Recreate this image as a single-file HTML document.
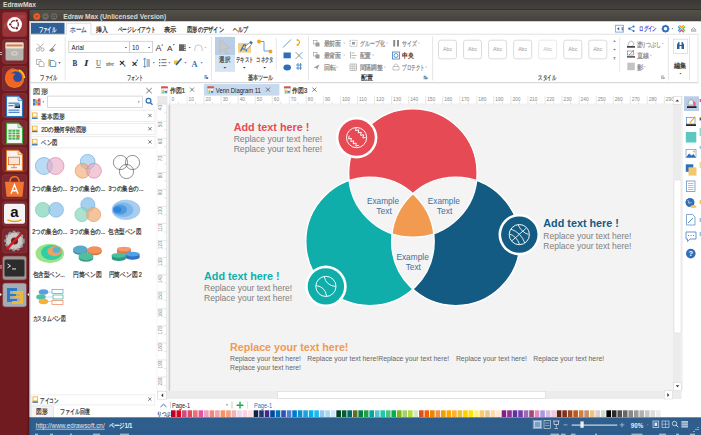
<!DOCTYPE html>
<html><head><meta charset="utf-8"><style>
html,body{margin:0;padding:0;width:701px;height:435px;overflow:hidden;background:#fff}
svg{display:block}
text{font-family:"Liberation Sans",sans-serif}
</style></head><body>
<svg width="701" height="435" viewBox="0 0 701 435">
<defs><linearGradient id="tb" x1="0" y1="0" x2="0" y2="1"><stop offset="0" stop-color="#3a3935"/><stop offset="1" stop-color="#45433e"/></linearGradient><linearGradient id="wt" x1="0" y1="0" x2="0" y2="1"><stop offset="0" stop-color="#54514b"/><stop offset="1" stop-color="#45423d"/></linearGradient></defs>
<rect x="0" y="0" width="701" height="10" fill="url(#tb)"/>
<rect x="0" y="9.3" width="701" height="0.8" fill="#2b2a27"/>
<text x="3" y="7" font-size="6.7" fill="#dcd8cf" font-weight="bold" textLength="33" lengthAdjust="spacingAndGlyphs">EdrawMax</text>
<defs><linearGradient id="lg" x1="0" x2="1"><stop offset="0" stop-color="#5a1418"/><stop offset="1" stop-color="#6e1e20"/></linearGradient></defs>
<rect x="0" y="10" width="29" height="425" fill="#701b1f"/>
<rect x="27.8" y="10" width="1.2" height="425" fill="#5a1216"/>
<rect x="29" y="10" width="672" height="11.5" fill="url(#wt)"/>
<rect x="29" y="10" width="1.2" height="11.5" fill="#3a3935"/>
<circle cx="36.8" cy="16.4" r="3.5" fill="#e9602a" stroke="#b3401a" stroke-width="0.4"/>
<path d="M35.7 15.3 L37.9 17.5 M37.9 15.3 L35.7 17.5" stroke="#7a2a10" stroke-width="0.7"/>
<circle cx="45.5" cy="16.4" r="3.4" fill="#6b6964" stroke="#595752" stroke-width="0.5"/><path d="M44 16.4 h3" stroke="#3f3d39" stroke-width="0.7"/>
<circle cx="54.1" cy="16.4" r="3.4" fill="#6b6964" stroke="#595752" stroke-width="0.5"/><rect x="52.8" y="15.1" width="2.6" height="2.6" fill="none" stroke="#3f3d39" stroke-width="0.6"/>
<text x="63.2" y="18.9" font-size="6.7" fill="#dcd8cf" font-weight="bold" textLength="103" lengthAdjust="spacingAndGlyphs">Edraw Max (Unlicensed Version)</text>
<rect x="29" y="21.5" width="672" height="413.5" fill="#ffffff"/>
<rect x="29" y="21.5" width="1.3" height="413.5" fill="#9aa7b8"/>
<rect x="31" y="22.8" width="33.5" height="11.5" fill="#2e5f97"/>
<text x="38.5" y="31.5" font-size="7" fill="#ffffff" textLength="17.5" lengthAdjust="spacingAndGlyphs" stroke="#ffffff" stroke-width="0.22">ファイル</text>
<path d="M66.4 34.5 V23.3 H91 V34.5" fill="#fff" stroke="#d4d4d4" stroke-width="0.8"/>
<text x="70" y="31.5" font-size="7" fill="#2e5f97" textLength="17" lengthAdjust="spacingAndGlyphs" stroke="#2e5f97" stroke-width="0.22">ホーム</text>
<text x="96" y="31.5" font-size="7" fill="#222" textLength="11.7" lengthAdjust="spacingAndGlyphs" stroke="#222" stroke-width="0.22">挿入</text>
<text x="117.5" y="31.5" font-size="7" fill="#222" textLength="38" lengthAdjust="spacingAndGlyphs" stroke="#222" stroke-width="0.22">ページレイアウト</text>
<text x="164" y="31.5" font-size="7" fill="#222" textLength="12.4" lengthAdjust="spacingAndGlyphs" stroke="#222" stroke-width="0.22">表示</text>
<text x="187" y="31.5" font-size="7" fill="#222" textLength="37" lengthAdjust="spacingAndGlyphs" stroke="#222" stroke-width="0.22">図形のデザイン</text>
<text x="233" y="31.5" font-size="7" fill="#222" textLength="15.3" lengthAdjust="spacingAndGlyphs" stroke="#222" stroke-width="0.22">ヘルプ</text>
<line x1="91" y1="34.2" x2="699.5" y2="34.2" stroke="#d9d9d9" stroke-width="0.8"/>
<line x1="30" y1="34.2" x2="66.4" y2="34.2" stroke="#d9d9d9" stroke-width="0.8"/>
<rect x="615.6" y="25.3" width="7.8" height="6.8" fill="#fff" stroke="#7aa6d6" stroke-width="0.9"/><path d="M617 28.7 l2.2 -1.8 v3.6z" fill="#2f5f97"/><path d="M622.2 27 v3.5" stroke="#2f5f97" stroke-width="1"/>
<g fill="#2f6fb7"><circle cx="629.2" cy="28.7" r="1.1"/><circle cx="633.6" cy="26.4" r="1"/><circle cx="633.6" cy="31" r="1"/></g><path d="M629.2 28.7 L633.6 26.4 M629.2 28.7 L633.6 31" stroke="#2f6fb7" stroke-width="0.7" fill="none"/>
<text x="639.3" y="31.4" font-size="7" fill="#3a3ad8" font-weight="bold" textLength="17.5" lengthAdjust="spacingAndGlyphs">ログイン</text>
<g transform="translate(665.5,28.7)"><circle r="2.6" fill="none" stroke="#2f6fb7" stroke-width="1.6"/><rect x="-0.75" y="-3.9" width="1.5" height="1.6" fill="#2f6fb7" transform="rotate(0)"/><rect x="-0.75" y="-3.9" width="1.5" height="1.6" fill="#2f6fb7" transform="rotate(45)"/><rect x="-0.75" y="-3.9" width="1.5" height="1.6" fill="#2f6fb7" transform="rotate(90)"/><rect x="-0.75" y="-3.9" width="1.5" height="1.6" fill="#2f6fb7" transform="rotate(135)"/><rect x="-0.75" y="-3.9" width="1.5" height="1.6" fill="#2f6fb7" transform="rotate(180)"/><rect x="-0.75" y="-3.9" width="1.5" height="1.6" fill="#2f6fb7" transform="rotate(225)"/><rect x="-0.75" y="-3.9" width="1.5" height="1.6" fill="#2f6fb7" transform="rotate(270)"/><rect x="-0.75" y="-3.9" width="1.5" height="1.6" fill="#2f6fb7" transform="rotate(315)"/></g>
<path d="M671.6 28.2 h1.8 l-0.9 1.1z" fill="#444"/>
<g fill="none" stroke-width="1.4"><path d="M679.3 25.2 l2.2 2.2 l2.2 -2.2" stroke="#f5a623"/><path d="M685 26.5 l-2.2 2.2 l2.2 2.2" stroke="#7ac143"/><path d="M679.3 32.2 l2.2 -2.2 l2.2 2.2" stroke="#ea4c89"/><path d="M678 26.5 l2.2 2.2 l-2.2 2.2" stroke="#29a9e0"/></g>
<path d="M691 30 l2.6 -2.4 l2.6 2.4 z M691 31.2 h5.2" fill="none" stroke="#8a8a8a" stroke-width="0.7"/>
<line x1="30" y1="82.6" x2="698" y2="82.6" stroke="#d6d6d6" stroke-width="1"/>
<line x1="698" y1="34.2" x2="698" y2="82.6" stroke="#e0e0e0" stroke-width="0.8"/>
<rect x="30" y="83.1" width="669.5" height="0.6" fill="#eeeeee"/>
<line x1="65.2" y1="36.5" x2="65.2" y2="80.5" stroke="#e3e3e3" stroke-width="0.9"/>
<line x1="211.5" y1="36.5" x2="211.5" y2="80.5" stroke="#e3e3e3" stroke-width="0.9"/>
<line x1="308.5" y1="36.5" x2="308.5" y2="80.5" stroke="#e3e3e3" stroke-width="0.9"/>
<line x1="432.6" y1="36.5" x2="432.6" y2="80.5" stroke="#e3e3e3" stroke-width="0.9"/>
<line x1="668.4" y1="36.5" x2="668.4" y2="80.5" stroke="#e3e3e3" stroke-width="0.9"/>
<line x1="689.5" y1="36.5" x2="689.5" y2="80.5" stroke="#e3e3e3" stroke-width="0.9"/>
<line x1="276.3" y1="38" x2="276.3" y2="70" stroke="#e3e3e3" stroke-width="0.8"/>
<line x1="619.7" y1="36.6" x2="619.7" y2="71.7" stroke="#e3e3e3" stroke-width="0.8"/>
<g stroke="#9a9a9a" fill="none" stroke-width="0.8"><circle cx="38" cy="49.5" r="1.6"/><circle cx="42.5" cy="49.5" r="1.6"/><path d="M38.8 48.3 L43.5 43.6 M41.7 48.3 L37 43.6"/></g>
<path d="M49.5 50.5 l2.5 -2.5 l2.5 2 l-2.5 1.5 z M52.5 48 l3 -4" stroke="#8a8a8a" stroke-width="0.9" fill="#9a9a9a"/>
<g fill="#fff" stroke="#9a9a9a" stroke-width="0.7"><path d="M36.5 59.5 h4.5 v5 h-4.5z"/><path d="M39 61.5 h3.5 l1.5 1.5 v3.5 h-5z"/></g>
<rect x="48.3" y="59.2" width="2.2" height="7" fill="#f2b84b"/><path d="M50.3 60.5 h3.5 l2 2 v4 h-5.5z" fill="#fff" stroke="#3b7dc4" stroke-width="0.8"/>
<path d="M58.3 62.3 h2.4 l-1.2 1.4z" fill="#444"/>
<text x="40.3" y="80" font-size="6.5" fill="#444" textLength="17.4" lengthAdjust="spacingAndGlyphs" stroke="#444" stroke-width="0.22">ファイル</text>
<rect x="68.8" y="41.3" width="60.6" height="11.2" fill="#fff" stroke="#c9c9c9" stroke-width="0.8"/>
<text x="71.5" y="49.8" font-size="7.2" fill="#222" textLength="12.5" lengthAdjust="spacingAndGlyphs">Arial</text>
<path d="M124.8 47 h2.2 l-1.1 1.3z" fill="#444"/>
<rect x="129.6" y="41.3" width="23" height="11.2" fill="#fff" stroke="#c9c9c9" stroke-width="0.8"/>
<text x="132" y="49.8" font-size="7.2" fill="#222" textLength="7" lengthAdjust="spacingAndGlyphs">10</text>
<path d="M148 47 h2.2 l-1.1 1.3z" fill="#444"/>
<text x="155.5" y="50.7" font-size="9" fill="#333" textLength="6" lengthAdjust="spacingAndGlyphs">A</text>
<path d="M161.2 45.5 l1 -1.2 l1 1.2z" fill="#333"/>
<text x="167" y="50.7" font-size="8" fill="#333" textLength="5.5" lengthAdjust="spacingAndGlyphs">A</text>
<path d="M172.8 44.3 l1 1.2 l1 -1.2z" fill="#333"/>
<g fill="#666"><rect x="179" y="44.5" width="7" height="1"/><rect x="179" y="46.3" width="7" height="1"/><rect x="179" y="48.1" width="7" height="1"/><rect x="179" y="49.9" width="7" height="1"/><rect x="179" y="44.5" width="5" height="6.4"/></g>
<path d="M188.6 47 h2.2 l-1.1 1.3z" fill="#2f5f97"/>
<path d="M194.8 51 v-2.3 a3.7 3.7 0 0 1 7.4 0 v2.3" fill="none" stroke="#bbb" stroke-width="0.8"/>
<path d="M204.4 47 h2.2 l-1.1 1.3z" fill="#bbb"/>
<text x="72.4" y="66.2" font-size="7.8" fill="#333" font-weight="bold" textLength="4.8" lengthAdjust="spacingAndGlyphs" style="font-family:Liberation Serif">B</text>
<text x="84" y="66.2" font-size="7.8" fill="#333" font-weight="bold" textLength="4.5" lengthAdjust="spacingAndGlyphs" style="font-family:Liberation Serif;font-style:italic">I</text>
<text x="96" y="65.6" font-size="7.2" fill="#444" textLength="5" lengthAdjust="spacingAndGlyphs" style="font-family:Liberation Serif">U</text>
<rect x="95.8" y="67" width="5.2" height="0.6" fill="#444"/>
<text x="106" y="66.2" font-size="6.6" fill="#555" textLength="8" lengthAdjust="spacingAndGlyphs" style="font-family:Liberation Serif">abc</text>
<rect x="106" y="63.7" width="8" height="0.5" fill="#555"/>
<text x="119.2" y="66.2" font-size="9" fill="#222" font-weight="bold" textLength="5.5" lengthAdjust="spacingAndGlyphs">×</text>
<rect x="124" y="65" width="1.4" height="1.6" fill="#3b7dc4"/>
<text x="131.8" y="67" font-size="9" fill="#222" font-weight="bold" textLength="5.5" lengthAdjust="spacingAndGlyphs">×</text>
<rect x="136.6" y="59.6" width="1.4" height="1.6" fill="#3b7dc4"/>
<path d="M143.5 59.5 l1.2 -1.5 l1.2 1.5 M143.5 66 l1.2 1.5 l1.2 -1.5 M144.7 58.5 v8.5" stroke="#3b7dc4" stroke-width="0.8" fill="none"/><g fill="#777"><rect x="146.5" y="59.5" width="3.5" height="1"/><rect x="146.5" y="61.5" width="3.5" height="1"/><rect x="146.5" y="63.5" width="3.5" height="1"/><rect x="146.5" y="65.5" width="3.5" height="1"/></g>
<path d="M152.7 62.3 h2.2 l-1.1 1.3z" fill="#2f5f97"/>
<g fill="#3b7dc4"><rect x="159" y="59" width="1.3" height="1.3"/><rect x="159" y="62" width="1.3" height="1.3"/><rect x="159" y="65" width="1.3" height="1.3"/></g><g fill="#666"><rect x="161.5" y="59.2" width="5" height="0.9"/><rect x="161.5" y="62.2" width="5" height="0.9"/><rect x="161.5" y="65.2" width="5" height="0.9"/></g>
<path d="M168.3 62.3 h2.2 l-1.1 1.3z" fill="#2f5f97"/>
<rect x="174" y="60.5" width="4.5" height="3.5" fill="#f2c12e"/><path d="M176 65 L181.5 58.5" stroke="#2f5f97" stroke-width="1.6"/>
<path d="M184.4 62.3 h2.2 l-1.1 1.3z" fill="#2f5f97"/>
<text x="191.4" y="66.5" font-size="9" fill="#2f6fb7" font-weight="bold" textLength="6" lengthAdjust="spacingAndGlyphs" style="font-family:Liberation Serif">A</text>
<path d="M200.5 62.3 h2.2 l-1.1 1.3z" fill="#2f5f97"/>
<text x="127" y="80" font-size="6.5" fill="#444" textLength="16.5" lengthAdjust="spacingAndGlyphs" stroke="#444" stroke-width="0.22">フォント</text>
<path d="M204.6 75.3 h2.5 v1 h-1.5 v2.5 h-1z M206 77 h2.2 v2 h-2.2z" fill="#5a7fa8"/>
<rect x="215" y="36.9" width="20" height="18.5" fill="#b9cde6"/>
<rect x="215" y="55.4" width="20" height="16.4" fill="#d5e3f3"/>
<path d="M220 40 L220 52.5 L223.3 49.5 L226 54 L228 53 L225.5 48.5 L230.5 48 Z" fill="#c9c9c9" stroke="#b5b5b5" stroke-width="0.5"/>
<text x="219.3" y="62" font-size="6.5" fill="#444" textLength="11" lengthAdjust="spacingAndGlyphs" stroke="#444" stroke-width="0.22">選択</text>
<path d="M223.4 67 h3 l-1.5 1.6z" fill="#2a4a78"/>
<rect x="238" y="43" width="13" height="9.7" fill="#f5cf86"/>
<path d="M240.5 51.3 L243.8 44.8 L245.2 44.8 L246.5 51.3 M241.8 49 h3.5" fill="none" stroke="#2f6fb7" stroke-width="1.2"/>
<path d="M244.8 50.2 L245.5 46.2 L249.5 42.8 L251.3 44.6 L247.9 48.6z" fill="#fff" stroke="#2f6fb7" stroke-width="0.6"/><path d="M249.3 42.2 l1.5 -1.5 l2 2 l-1.5 1.5z" fill="#2f6fb7"/>
<text x="235.7" y="62" font-size="6.5" fill="#444" textLength="17.8" lengthAdjust="spacingAndGlyphs" stroke="#444" stroke-width="0.22">テキスト</text>
<path d="M242.9 67 h3 l-1.5 1.6z" fill="#2a4a78"/>
<path d="M259.5 41.5 H264 V51 H270" fill="none" stroke="#4a86c5" stroke-width="0.8"/><circle cx="259" cy="41.5" r="1.9" fill="#f2a516"/><circle cx="270.5" cy="51.5" r="1.9" fill="#f2a516"/>
<text x="256.4" y="62" font-size="6.5" fill="#444" textLength="17" lengthAdjust="spacingAndGlyphs" stroke="#444" stroke-width="0.22">コネクタ</text>
<path d="M263.2 67 h3 l-1.5 1.6z" fill="#2a4a78"/>
<path d="M283 47.5 L291 39.5" stroke="#3b7dc4" stroke-width="0.8"/>
<rect x="283.5" y="52.5" width="7.3" height="5.8" fill="#2f6fb7"/>
<ellipse cx="287.2" cy="67.4" rx="3.8" ry="3" fill="#2f6fb7"/>
<path d="M297 40 q3 0.5 2.5 2.5 q-0.5 2 -2.5 2.5" fill="none" stroke="#f2a516" stroke-width="1.1"/><circle cx="297.5" cy="40" r="0.9" fill="#f2a516"/><circle cx="297.5" cy="45" r="0.9" fill="#f2a516"/>
<path d="M295.5 52 L302.5 59 M302.5 52 L295.5 59" stroke="#3b7dc4" stroke-width="0.7"/><circle cx="299" cy="55.5" r="1.1" fill="#f2a516"/>
<path d="M296 65 h6 M296 68 h6 M298 63 v7 M300.5 63 v7" stroke="#3b7dc4" stroke-width="0.8" fill="none"/>
<text x="247.8" y="80" font-size="6.5" fill="#444" textLength="25.7" lengthAdjust="spacingAndGlyphs" stroke="#444" stroke-width="0.22">基本ツール</text>
<rect x="313.5" y="40.5" width="3.5" height="3.5" fill="none" stroke="#9a9a9a" stroke-width="0.6"/><rect x="315.5" y="42.5" width="4" height="4" fill="#9a9a9a"/>
<rect x="313.5" y="52.5" width="3.5" height="3.5" fill="none" stroke="#9a9a9a" stroke-width="0.6"/><rect x="315.5" y="54.5" width="4" height="4" fill="#9a9a9a"/>
<path d="M313.5 67.5 L319.5 64.5 L317 70 L316.5 68z" fill="#9a9a9a"/>
<text x="323.5" y="46" font-size="6.5" fill="#8a8a8a" textLength="17.7" lengthAdjust="spacingAndGlyphs" stroke="#8a8a8a" stroke-width="0.22">最前面</text>
<text x="323.5" y="58" font-size="6.5" fill="#8a8a8a" textLength="17.7" lengthAdjust="spacingAndGlyphs" stroke="#8a8a8a" stroke-width="0.22">最背面</text>
<text x="323.5" y="70" font-size="6.5" fill="#8a8a8a" textLength="12" lengthAdjust="spacingAndGlyphs" stroke="#8a8a8a" stroke-width="0.22">回転</text>
<path d="M343.6 43 h1.6 M343.6 55 h1.6 M336.3 67 h1.6" stroke="#9a9a9a" stroke-width="0.6"/>
<rect x="350" y="40.3" width="7" height="6" fill="none" stroke="#777" stroke-width="0.6" stroke-dasharray="1.2 1"/><rect x="352" y="42" width="3" height="2.5" fill="#999"/>
<path d="M350.5 51.5 v7 M351.5 53 h3 M351.5 55.5 h5 M351.5 58 h4" stroke="#9a9a9a" stroke-width="0.7"/>
<rect x="350" y="64" width="6.5" height="6.5" fill="none" stroke="#9a9a9a" stroke-width="0.6"/><path d="M352.2 64 v6.5 M354.3 64 v6.5 M350 66.2 h6.5 M350 68.3 h6.5" stroke="#9a9a9a" stroke-width="0.5"/>
<text x="359.7" y="46" font-size="6.5" fill="#8a8a8a" textLength="25" lengthAdjust="spacingAndGlyphs" stroke="#8a8a8a" stroke-width="0.22">グループ化</text>
<text x="359.7" y="58" font-size="6.5" fill="#8a8a8a" textLength="11.5" lengthAdjust="spacingAndGlyphs" stroke="#8a8a8a" stroke-width="0.22">配置</text>
<text x="359.7" y="70" font-size="6.5" fill="#8a8a8a" textLength="23" lengthAdjust="spacingAndGlyphs" stroke="#8a8a8a" stroke-width="0.22">間隔調整</text>
<path d="M386.3 43 h1.6 M372.5 55 h1.6 M384 67 h1.6" stroke="#9a9a9a" stroke-width="0.6"/>
<rect x="393.2" y="40" width="2" height="6.5" fill="#8a8a8a"/><rect x="397" y="40" width="2" height="6.5" fill="#8a8a8a"/>
<rect x="392.5" y="52" width="7" height="7" fill="#fff" stroke="#3b7dc4" stroke-width="0.8"/><circle cx="396" cy="55.5" r="2" fill="none" stroke="#3b7dc4" stroke-width="0.8"/>
<path d="M393 70 h6 v-3.5 h-6z M394.3 66.5 v-1.5 q1.7 -2.5 3.4 0 v1.5" fill="none" stroke="#aaa" stroke-width="0.7"/>
<text x="402.4" y="46" font-size="6.5" fill="#8a8a8a" textLength="14.8" lengthAdjust="spacingAndGlyphs" stroke="#8a8a8a" stroke-width="0.22">サイズ</text>
<text x="402.4" y="58" font-size="6.5" fill="#222" font-weight="bold" textLength="11.5" lengthAdjust="spacingAndGlyphs">中央</text>
<text x="402.4" y="70" font-size="6.5" fill="#8a8a8a" textLength="22.5" lengthAdjust="spacingAndGlyphs" stroke="#8a8a8a" stroke-width="0.22">プロテクト</text>
<path d="M418.2 43 h1.6 M425.3 67 h1.6" stroke="#9a9a9a" stroke-width="0.6"/>
<text x="360.7" y="80.2" font-size="6.5" fill="#333" font-weight="bold" textLength="12" lengthAdjust="spacingAndGlyphs">配置</text>
<path d="M423.7 75.7 h2.5 v1 h-1.5 v2.5 h-1z M425.1 77.3 h2.5 v2 h-2.5z" fill="#5a7fa8"/>
<rect x="438.5" y="40.2" width="18" height="18.6" rx="2.2" fill="#fff" stroke="#d2d2d2" stroke-width="0.8"/>
<text x="447.5" y="51.3" font-size="4.6" fill="#9a9a9a" textLength="9" lengthAdjust="spacingAndGlyphs" text-anchor="middle">Abc</text>
<rect x="463.55" y="40.2" width="18" height="18.6" rx="2.2" fill="#fff" stroke="#d2d2d2" stroke-width="0.8"/>
<text x="472.55" y="51.3" font-size="4.6" fill="#9a9a9a" textLength="9" lengthAdjust="spacingAndGlyphs" text-anchor="middle">Abc</text>
<rect x="488.6" y="40.2" width="18" height="18.6" rx="2.2" fill="#fff" stroke="#d2d2d2" stroke-width="0.8"/>
<text x="497.6" y="51.3" font-size="4.6" fill="#9a9a9a" textLength="9" lengthAdjust="spacingAndGlyphs" text-anchor="middle">Abc</text>
<rect x="513.65" y="40.2" width="18" height="18.6" rx="2.2" fill="#fff" stroke="#d2d2d2" stroke-width="0.8"/>
<text x="522.65" y="51.3" font-size="4.6" fill="#9a9a9a" textLength="9" lengthAdjust="spacingAndGlyphs" text-anchor="middle">Abc</text>
<rect x="538.7" y="40.2" width="18" height="18.6" rx="2.2" fill="#fff" stroke="#e2e2e2" stroke-width="0.8"/>
<text x="547.7" y="51.3" font-size="4.6" fill="#bbbbbb" textLength="9" lengthAdjust="spacingAndGlyphs" text-anchor="middle">Abc</text>
<rect x="563.75" y="40.2" width="18" height="18.6" rx="2.2" fill="#fff" stroke="#d2d2d2" stroke-width="0.8"/>
<text x="572.75" y="51.3" font-size="4.6" fill="#9a9a9a" textLength="9" lengthAdjust="spacingAndGlyphs" text-anchor="middle">Abc</text>
<rect x="588.8000000000001" y="40.2" width="18" height="18.6" rx="2.2" fill="#fff" stroke="#d2d2d2" stroke-width="0.8"/>
<text x="597.8000000000001" y="51.3" font-size="4.6" fill="#9a9a9a" textLength="9" lengthAdjust="spacingAndGlyphs" text-anchor="middle">Abc</text>
<path d="M613.5 41.5 l1 -1 l1 1z M613.5 49.3 l1 1 l1 -1z M613.5 57.6 l1 1 l1 -1z M613.5 59.3 h2" fill="#555" stroke="#555" stroke-width="0.3"/>
<text x="538.4" y="80" font-size="6.5" fill="#444" textLength="17.6" lengthAdjust="spacingAndGlyphs" stroke="#444" stroke-width="0.22">スタイル</text>
<path d="M628 45 q1 -4 3 -4 q2 0 3 3 l-2 2.5 h-4z" fill="#fff" stroke="#8a8a8a" stroke-width="0.6"/><rect x="627" y="46.2" width="8" height="1.4" fill="#222"/>
<text x="636.6" y="46.5" font-size="6.5" fill="#8a8a8a" textLength="24.5" lengthAdjust="spacingAndGlyphs" stroke="#8a8a8a" stroke-width="0.22">塗りつぶし</text>
<path d="M662 43.5 h1.5" stroke="#999" stroke-width="0.6"/>
<rect x="627.5" y="51" width="6" height="4" fill="none" stroke="#555" stroke-width="0.5"/><path d="M629 55 L634 50" stroke="#777" stroke-width="0.7"/><rect x="627" y="56.3" width="8" height="1.2" fill="#222"/>
<text x="636.6" y="58" font-size="6.5" fill="#8a8a8a" textLength="12" lengthAdjust="spacingAndGlyphs" stroke="#8a8a8a" stroke-width="0.22">直線</text>
<path d="M650 55.4 h1.5" stroke="#999" stroke-width="0.6"/>
<rect x="627.3" y="62.7" width="7.5" height="7.5" fill="#c3c3c3"/>
<text x="636.6" y="70" font-size="6.5" fill="#8a8a8a" textLength="6.5" lengthAdjust="spacingAndGlyphs" stroke="#8a8a8a" stroke-width="0.22">影</text>
<path d="M644 66.6 h1.5" stroke="#999" stroke-width="0.6"/>
<path d="M661.3 75.6 h2.5 v1 h-1.5 v2.5 h-1z M662.7 77.2 h2 v1.8 h-2z" fill="#a0a0a0"/>
<rect x="673.4" y="39.2" width="14.3" height="14.3" fill="#fff" stroke="#d6d6d6" stroke-width="0.7"/>
<path d="M677 49 v-4.5 l1.5 -2.5 h1 v3 h2 v-3 h1 l1.5 2.5 v4.5 h-2.5 v-3 h-2 v3z" fill="#2f5f97"/>
<text x="673.6" y="67.5" font-size="6.5" fill="#333" textLength="12.4" lengthAdjust="spacingAndGlyphs" stroke="#333" stroke-width="0.22">編集</text>
<path d="M679.4 73 h2.2 l-1.1 1.3z" fill="#2f5f97"/>
<text x="33.3" y="93.6" font-size="7.2" fill="#555" textLength="14.5" lengthAdjust="spacingAndGlyphs" stroke="#555" stroke-width="0.22">図形</text>
<path d="M146.3 88 L151.8 93.3 M151.8 88 L146.3 93.3" stroke="#555" stroke-width="0.8"/>
<g><rect x="33" y="99" width="2.5" height="6.5" fill="#3b7dc4"/><rect x="35.5" y="99.5" width="2.5" height="6" fill="#f2a516"/><rect x="38" y="98.5" width="2.5" height="7" fill="#e84a5f"/><rect x="33" y="101.5" width="7.5" height="1.3" fill="#8ad"/></g>
<path d="M42.3 101.5 h2 l-1 1.2z" fill="#555"/>
<rect x="47.4" y="96.1" width="95" height="11.3" fill="#fff" stroke="#cfcfcf" stroke-width="0.8"/>
<path d="M137.8 101.5 h2 l-1 1.2z" fill="#555"/>
<circle cx="148.5" cy="100.8" r="2.4" fill="none" stroke="#2f6fb7" stroke-width="1.2"/><path d="M150.2 102.5 L152.5 104.8" stroke="#2f6fb7" stroke-width="1.4"/>
<rect x="31.4" y="110.2" width="123.6" height="11.3" fill="#fff" stroke="#e6e6e6" stroke-width="0.7"/>
<rect x="32" y="112.4" width="5.5" height="6.5" fill="#f2b84b"/><rect x="33" y="113.4" width="3.5" height="3" fill="#fff"/><rect x="32" y="117.7" width="5.5" height="1.3" fill="#3b7dc4"/>
<text x="41.2" y="118.5" font-size="6.8" fill="#333" textLength="23.5" lengthAdjust="spacingAndGlyphs" stroke="#333" stroke-width="0.22">基本図形</text>
<path d="M148.3 113.9 L151.6 117.2 M151.6 113.9 L148.3 117.2" stroke="#444" stroke-width="0.7"/>
<rect x="31.4" y="123.4" width="123.6" height="11.3" fill="#fff" stroke="#e6e6e6" stroke-width="0.7"/>
<rect x="32" y="125.60000000000001" width="5.5" height="6.5" fill="#f2b84b"/><rect x="33" y="126.60000000000001" width="3.5" height="3" fill="#fff"/><rect x="32" y="130.9" width="5.5" height="1.3" fill="#3b7dc4"/>
<text x="41.2" y="131.70000000000002" font-size="6.8" fill="#333" textLength="45.5" lengthAdjust="spacingAndGlyphs" stroke="#333" stroke-width="0.22">2Dの幾何学的図形</text>
<path d="M148.3 127.10000000000001 L151.6 130.4 M151.6 127.10000000000001 L148.3 130.4" stroke="#444" stroke-width="0.7"/>
<rect x="31.4" y="136.6" width="123.6" height="11.3" fill="#fff" stroke="#e6e6e6" stroke-width="0.7"/>
<rect x="32" y="138.79999999999998" width="5.5" height="6.5" fill="#f2b84b"/><rect x="33" y="139.79999999999998" width="3.5" height="3" fill="#fff"/><rect x="32" y="144.1" width="5.5" height="1.3" fill="#3b7dc4"/>
<text x="41.2" y="144.9" font-size="6.8" fill="#333" textLength="16" lengthAdjust="spacingAndGlyphs" stroke="#333" stroke-width="0.22">ベン図</text>
<path d="M148.3 140.29999999999998 L151.6 143.6 M151.6 140.29999999999998 L148.3 143.6" stroke="#444" stroke-width="0.7"/>
<circle cx="43.9" cy="166" r="8.5" fill="#8ec3ea" fill-opacity="0.6" stroke="#5aa6de" stroke-width="0.6"/>
<circle cx="55.5" cy="166" r="8.5" fill="#e7a7c1" fill-opacity="0.6" stroke="#d9779c" stroke-width="0.6"/>
<circle cx="87.7" cy="161.8" r="7.4" fill="#8ec3ea" fill-opacity="0.6" stroke="#5aa6de" stroke-width="0.6"/>
<circle cx="82.6" cy="170.8" r="7.4" fill="#f0a66e" fill-opacity="0.6" stroke="#e58a45" stroke-width="0.6"/>
<circle cx="94" cy="170.8" r="7.4" fill="#e7a7c1" fill-opacity="0.6" stroke="#d9779c" stroke-width="0.6"/>
<circle cx="120.5" cy="162.5" r="7.1" fill="none" stroke="#444" stroke-width="0.6"/>
<circle cx="132.5" cy="162.5" r="7.1" fill="none" stroke="#444" stroke-width="0.6"/>
<circle cx="126.5" cy="171.5" r="7.1" fill="none" stroke="#444" stroke-width="0.6"/>
<circle cx="42.8" cy="209.8" r="7.4" fill="#8fd8c3" fill-opacity="0.8" stroke="#6cc9ad" stroke-width="0.6"/>
<circle cx="56.1" cy="209.8" r="7.4" fill="#8ec3ea" fill-opacity="0.75" stroke="#6aaee2" stroke-width="0.6"/>
<circle cx="87.9" cy="204.7" r="7.1" fill="#8ec3ea" fill-opacity="0.8" stroke="#6aaee2" stroke-width="0.6"/>
<circle cx="82" cy="214.6" r="7.1" fill="#8fd8c3" fill-opacity="0.75" stroke="#6cc9ad" stroke-width="0.6"/>
<circle cx="93.6" cy="214.6" r="7.1" fill="#f0b07c" fill-opacity="0.75" stroke="#e8955a" stroke-width="0.6"/>
<ellipse cx="126" cy="209.8" rx="14" ry="9.8" fill="#a9cdf0" stroke="#8bbbe8" stroke-width="0.5"/><ellipse cx="123" cy="209.8" rx="10.5" ry="7.2" fill="#7fb7ea"/><ellipse cx="120" cy="209.8" rx="7" ry="5" fill="#4f9be0"/><ellipse cx="117.5" cy="209.8" rx="4" ry="3" fill="#2d86d8"/>
<ellipse cx="49.8" cy="253.4" rx="14.3" ry="9.7" fill="#9be28a"/><ellipse cx="51.5" cy="252.5" rx="10.5" ry="7.5" fill="#2fcfa5"/><ellipse cx="54.5" cy="251.2" rx="7.2" ry="5" fill="#f0a060"/><ellipse cx="56.5" cy="250" rx="4" ry="3" fill="#5fb0d5"/>
<ellipse cx="80.4" cy="251" rx="7.4" ry="3.9" fill="#3f86a6"/><ellipse cx="80.4" cy="249.5" rx="7.4" ry="3.9" fill="#5ba8c9"/><ellipse cx="94.6" cy="251.5" rx="7.2" ry="3.8" fill="#d9733a"/><ellipse cx="94.6" cy="250" rx="7.2" ry="3.8" fill="#f0925c"/><ellipse cx="86" cy="258" rx="7.4" ry="3.8" fill="#35a081"/><ellipse cx="86" cy="256.4" rx="7.4" ry="3.8" fill="#4fbf9f"/>
<g><rect x="117" y="249" width="14" height="3.2" fill="#e07a4e"/><ellipse cx="124" cy="252.2" rx="7" ry="2.3" fill="#e07a4e"/><ellipse cx="124" cy="249" rx="7" ry="2.3" fill="#f39a6e"/><rect x="111.8" y="255.3" width="14" height="3.2" fill="#2a9a80"/><ellipse cx="118.8" cy="258.5" rx="7" ry="2.4" fill="#2a9a80"/><ellipse cx="118.8" cy="255.3" rx="7" ry="2.4" fill="#48c0a0"/><rect x="125.6" y="254.1" width="14" height="3.2" fill="#2f72c0"/><ellipse cx="132.6" cy="257.3" rx="7" ry="2.4" fill="#2f72c0"/><ellipse cx="132.6" cy="254.1" rx="7" ry="2.4" fill="#4fa2e8"/></g>
<ellipse cx="43.5" cy="292" rx="4.8" ry="2.8" fill="#5b9ee0"/><ellipse cx="41" cy="297" rx="4.8" ry="2.8" fill="#4fbfa5"/><ellipse cx="43.5" cy="301.5" rx="4.8" ry="2.8" fill="#f4b23a"/>
<g fill="#fff" stroke-width="0.7"><rect x="52" y="289.5" width="11" height="4" stroke="#5b9ee0"/><rect x="53" y="295" width="10" height="4" stroke="#2fb79f"/><rect x="52" y="300.5" width="11" height="4" stroke="#e8845a"/></g><path d="M48 292 h4 M46 297 h7 M48 301.5 h4" stroke="#9bc" stroke-width="0.5"/>
<text x="32.2" y="190.5" font-size="6.6" fill="#333" textLength="35" lengthAdjust="spacingAndGlyphs" stroke="#333" stroke-width="0.22">2つの集合の...</text>
<text x="70.3" y="190.5" font-size="6.6" fill="#333" textLength="35" lengthAdjust="spacingAndGlyphs" stroke="#333" stroke-width="0.22">3つの集合の...</text>
<text x="108.4" y="190.5" font-size="6.6" fill="#333" textLength="35" lengthAdjust="spacingAndGlyphs" stroke="#333" stroke-width="0.22">3つの集合の...</text>
<text x="32.2" y="234" font-size="6.6" fill="#333" textLength="35" lengthAdjust="spacingAndGlyphs" stroke="#333" stroke-width="0.22">2つの集合の...</text>
<text x="70.3" y="234" font-size="6.6" fill="#333" textLength="35" lengthAdjust="spacingAndGlyphs" stroke="#333" stroke-width="0.22">3つの集合の...</text>
<text x="108.4" y="234" font-size="6.6" fill="#333" textLength="33" lengthAdjust="spacingAndGlyphs" stroke="#333" stroke-width="0.22">包含型ベン図</text>
<text x="32.6" y="277.3" font-size="6.6" fill="#333" textLength="32" lengthAdjust="spacingAndGlyphs" stroke="#333" stroke-width="0.22">包含型ベン...</text>
<text x="72.8" y="277.3" font-size="6.6" fill="#333" textLength="28.8" lengthAdjust="spacingAndGlyphs" stroke="#333" stroke-width="0.22">円筒ベン図</text>
<text x="108.5" y="277.3" font-size="6.6" fill="#333" textLength="33.3" lengthAdjust="spacingAndGlyphs" stroke="#333" stroke-width="0.22">円筒ベン図 2</text>
<text x="32.6" y="321" font-size="6.6" fill="#333" textLength="33.4" lengthAdjust="spacingAndGlyphs" stroke="#333" stroke-width="0.22">カスタムベン図</text>
<rect x="31.2" y="394.9" width="123.6" height="10" fill="#fff" stroke="#e6e6e6" stroke-width="0.7"/>
<rect x="32.5" y="396.3" width="5.5" height="6.5" fill="#f2b84b"/><rect x="33.5" y="397.3" width="3.5" height="3" fill="#fff"/><rect x="32.5" y="401.5" width="5.5" height="1.3" fill="#3b7dc4"/>
<text x="40" y="402.6" font-size="6.8" fill="#333" textLength="18.7" lengthAdjust="spacingAndGlyphs" stroke="#333" stroke-width="0.22">アイコン</text>
<path d="M148.2 397.5 L151.4 400.7 M151.4 397.5 L148.2 400.7" stroke="#444" stroke-width="0.7"/>
<rect x="31.2" y="406" width="22.5" height="11.4" fill="#f4f4f4" stroke="#dedede" stroke-width="0.6"/>
<text x="36" y="414" font-size="6.6" fill="#333" textLength="11.5" lengthAdjust="spacingAndGlyphs" stroke="#333" stroke-width="0.22">図形</text>
<text x="60" y="414" font-size="6.6" fill="#333" textLength="30" lengthAdjust="spacingAndGlyphs" stroke="#333" stroke-width="0.22">ファイル回復</text>
<line x1="157.2" y1="104.2" x2="157.2" y2="390.5" stroke="#dedede" stroke-width="0.6"/>
<rect x="156" y="83.7" width="543.5" height="12" fill="#ffffff"/>
<rect x="203.9" y="84.1" width="75.5" height="11.7" fill="#c7d9ef"/>
<rect x="161" y="86.3" width="7" height="2.2" rx="1" fill="#d9534f"/><rect x="161.6" y="88.5" width="5.8" height="4.8" fill="#fff" stroke="#aaa" stroke-width="0.4"/><rect x="162.3" y="89.6" width="2" height="1.5" fill="#f2b84b"/><rect x="164.5" y="90.8" width="2.5" height="2" fill="#3b7dc4"/><rect x="162.3" y="91.3" width="1.5" height="1.8" fill="#4fbf7a"/>
<rect x="207.2" y="86.3" width="7" height="2.2" rx="1" fill="#d9534f"/><rect x="207.79999999999998" y="88.5" width="5.8" height="4.8" fill="#fff" stroke="#aaa" stroke-width="0.4"/><rect x="208.5" y="89.6" width="2" height="1.5" fill="#f2b84b"/><rect x="210.7" y="90.8" width="2.5" height="2" fill="#3b7dc4"/><rect x="208.5" y="91.3" width="1.5" height="1.8" fill="#4fbf7a"/>
<rect x="283.8" y="86.3" width="7" height="2.2" rx="1" fill="#d9534f"/><rect x="284.40000000000003" y="88.5" width="5.8" height="4.8" fill="#fff" stroke="#aaa" stroke-width="0.4"/><rect x="285.1" y="89.6" width="2" height="1.5" fill="#f2b84b"/><rect x="287.3" y="90.8" width="2.5" height="2" fill="#3b7dc4"/><rect x="285.1" y="91.3" width="1.5" height="1.8" fill="#4fbf7a"/>
<text x="170" y="93.4" font-size="7" fill="#333" textLength="15" lengthAdjust="spacingAndGlyphs" stroke="#333" stroke-width="0.22">作図1</text>
<text x="215.8" y="93.4" font-size="7" fill="#222" textLength="45" lengthAdjust="spacingAndGlyphs">Venn Diagram 11</text>
<text x="292.4" y="93.4" font-size="7" fill="#333" textLength="15" lengthAdjust="spacingAndGlyphs" stroke="#333" stroke-width="0.22">作図3</text>
<path d="M190 87.6 L194 91.6 M194 87.6 L190 91.6" stroke="#444" stroke-width="0.7"/>
<path d="M266 87.6 L270 91.6 M270 87.6 L266 91.6" stroke="#444" stroke-width="0.7"/>
<path d="M312.4 87.6 L316.4 91.6 M316.4 87.6 L312.4 91.6" stroke="#444" stroke-width="0.7"/>
<rect x="156.5" y="95.8" width="517" height="8.4" fill="#ffffff"/>
<line x1="156.5" y1="104.2" x2="673" y2="104.2" stroke="#dcdcdc" stroke-width="0.6"/>
<rect x="157.3" y="96" width="10.2" height="8.2" fill="#e9e9e9"/>
<rect x="157.3" y="104.2" width="9.2" height="286" fill="#ffffff"/>
<line x1="166.5" y1="104.2" x2="166.5" y2="390" stroke="#dcdcdc" stroke-width="0.6"/>
<line x1="170.0" y1="96" x2="170.0" y2="104.2" stroke="#cfcfcf" stroke-width="0.5"/>
<text x="171.5" y="101.3" font-size="4.8" fill="#888">0</text>
<line x1="178.523" y1="101.5" x2="178.523" y2="104.2" stroke="#cfcfcf" stroke-width="0.5"/>
<line x1="187.046" y1="96" x2="187.046" y2="104.2" stroke="#cfcfcf" stroke-width="0.5"/>
<text x="188.546" y="101.3" font-size="4.8" fill="#888">10</text>
<line x1="195.569" y1="101.5" x2="195.569" y2="104.2" stroke="#cfcfcf" stroke-width="0.5"/>
<line x1="204.09199999999998" y1="96" x2="204.09199999999998" y2="104.2" stroke="#cfcfcf" stroke-width="0.5"/>
<text x="205.59199999999998" y="101.3" font-size="4.8" fill="#888">20</text>
<line x1="212.615" y1="101.5" x2="212.615" y2="104.2" stroke="#cfcfcf" stroke-width="0.5"/>
<line x1="221.138" y1="96" x2="221.138" y2="104.2" stroke="#cfcfcf" stroke-width="0.5"/>
<text x="222.638" y="101.3" font-size="4.8" fill="#888">30</text>
<line x1="229.661" y1="101.5" x2="229.661" y2="104.2" stroke="#cfcfcf" stroke-width="0.5"/>
<line x1="238.184" y1="96" x2="238.184" y2="104.2" stroke="#cfcfcf" stroke-width="0.5"/>
<text x="239.684" y="101.3" font-size="4.8" fill="#888">40</text>
<line x1="246.707" y1="101.5" x2="246.707" y2="104.2" stroke="#cfcfcf" stroke-width="0.5"/>
<line x1="255.23" y1="96" x2="255.23" y2="104.2" stroke="#cfcfcf" stroke-width="0.5"/>
<text x="256.73" y="101.3" font-size="4.8" fill="#888">50</text>
<line x1="263.753" y1="101.5" x2="263.753" y2="104.2" stroke="#cfcfcf" stroke-width="0.5"/>
<line x1="272.276" y1="96" x2="272.276" y2="104.2" stroke="#cfcfcf" stroke-width="0.5"/>
<text x="273.776" y="101.3" font-size="4.8" fill="#888">60</text>
<line x1="280.799" y1="101.5" x2="280.799" y2="104.2" stroke="#cfcfcf" stroke-width="0.5"/>
<line x1="289.322" y1="96" x2="289.322" y2="104.2" stroke="#cfcfcf" stroke-width="0.5"/>
<text x="290.822" y="101.3" font-size="4.8" fill="#888">70</text>
<line x1="297.845" y1="101.5" x2="297.845" y2="104.2" stroke="#cfcfcf" stroke-width="0.5"/>
<line x1="306.368" y1="96" x2="306.368" y2="104.2" stroke="#cfcfcf" stroke-width="0.5"/>
<text x="307.868" y="101.3" font-size="4.8" fill="#888">80</text>
<line x1="314.89099999999996" y1="101.5" x2="314.89099999999996" y2="104.2" stroke="#cfcfcf" stroke-width="0.5"/>
<line x1="323.414" y1="96" x2="323.414" y2="104.2" stroke="#cfcfcf" stroke-width="0.5"/>
<text x="324.914" y="101.3" font-size="4.8" fill="#888">90</text>
<line x1="331.937" y1="101.5" x2="331.937" y2="104.2" stroke="#cfcfcf" stroke-width="0.5"/>
<line x1="340.46" y1="96" x2="340.46" y2="104.2" stroke="#cfcfcf" stroke-width="0.5"/>
<text x="341.96" y="101.3" font-size="4.8" fill="#888">100</text>
<line x1="348.98299999999995" y1="101.5" x2="348.98299999999995" y2="104.2" stroke="#cfcfcf" stroke-width="0.5"/>
<line x1="357.506" y1="96" x2="357.506" y2="104.2" stroke="#cfcfcf" stroke-width="0.5"/>
<text x="359.006" y="101.3" font-size="4.8" fill="#888">110</text>
<line x1="366.029" y1="101.5" x2="366.029" y2="104.2" stroke="#cfcfcf" stroke-width="0.5"/>
<line x1="374.552" y1="96" x2="374.552" y2="104.2" stroke="#cfcfcf" stroke-width="0.5"/>
<text x="376.052" y="101.3" font-size="4.8" fill="#888">120</text>
<line x1="383.075" y1="101.5" x2="383.075" y2="104.2" stroke="#cfcfcf" stroke-width="0.5"/>
<line x1="391.59799999999996" y1="96" x2="391.59799999999996" y2="104.2" stroke="#cfcfcf" stroke-width="0.5"/>
<text x="393.09799999999996" y="101.3" font-size="4.8" fill="#888">130</text>
<line x1="400.121" y1="101.5" x2="400.121" y2="104.2" stroke="#cfcfcf" stroke-width="0.5"/>
<line x1="408.644" y1="96" x2="408.644" y2="104.2" stroke="#cfcfcf" stroke-width="0.5"/>
<text x="410.144" y="101.3" font-size="4.8" fill="#888">140</text>
<line x1="417.167" y1="101.5" x2="417.167" y2="104.2" stroke="#cfcfcf" stroke-width="0.5"/>
<line x1="425.69" y1="96" x2="425.69" y2="104.2" stroke="#cfcfcf" stroke-width="0.5"/>
<text x="427.19" y="101.3" font-size="4.8" fill="#888">150</text>
<line x1="434.21299999999997" y1="101.5" x2="434.21299999999997" y2="104.2" stroke="#cfcfcf" stroke-width="0.5"/>
<line x1="442.736" y1="96" x2="442.736" y2="104.2" stroke="#cfcfcf" stroke-width="0.5"/>
<text x="444.236" y="101.3" font-size="4.8" fill="#888">160</text>
<line x1="451.25899999999996" y1="101.5" x2="451.25899999999996" y2="104.2" stroke="#cfcfcf" stroke-width="0.5"/>
<line x1="459.782" y1="96" x2="459.782" y2="104.2" stroke="#cfcfcf" stroke-width="0.5"/>
<text x="461.282" y="101.3" font-size="4.8" fill="#888">170</text>
<line x1="468.305" y1="101.5" x2="468.305" y2="104.2" stroke="#cfcfcf" stroke-width="0.5"/>
<line x1="476.828" y1="96" x2="476.828" y2="104.2" stroke="#cfcfcf" stroke-width="0.5"/>
<text x="478.328" y="101.3" font-size="4.8" fill="#888">180</text>
<line x1="485.351" y1="101.5" x2="485.351" y2="104.2" stroke="#cfcfcf" stroke-width="0.5"/>
<line x1="493.87399999999997" y1="96" x2="493.87399999999997" y2="104.2" stroke="#cfcfcf" stroke-width="0.5"/>
<text x="495.37399999999997" y="101.3" font-size="4.8" fill="#888">190</text>
<line x1="502.397" y1="101.5" x2="502.397" y2="104.2" stroke="#cfcfcf" stroke-width="0.5"/>
<line x1="510.91999999999996" y1="96" x2="510.91999999999996" y2="104.2" stroke="#cfcfcf" stroke-width="0.5"/>
<text x="512.42" y="101.3" font-size="4.8" fill="#888">200</text>
<line x1="519.443" y1="101.5" x2="519.443" y2="104.2" stroke="#cfcfcf" stroke-width="0.5"/>
<line x1="527.9659999999999" y1="96" x2="527.9659999999999" y2="104.2" stroke="#cfcfcf" stroke-width="0.5"/>
<text x="529.4659999999999" y="101.3" font-size="4.8" fill="#888">210</text>
<line x1="536.489" y1="101.5" x2="536.489" y2="104.2" stroke="#cfcfcf" stroke-width="0.5"/>
<line x1="545.012" y1="96" x2="545.012" y2="104.2" stroke="#cfcfcf" stroke-width="0.5"/>
<text x="546.512" y="101.3" font-size="4.8" fill="#888">220</text>
<line x1="553.535" y1="101.5" x2="553.535" y2="104.2" stroke="#cfcfcf" stroke-width="0.5"/>
<line x1="562.058" y1="96" x2="562.058" y2="104.2" stroke="#cfcfcf" stroke-width="0.5"/>
<text x="563.558" y="101.3" font-size="4.8" fill="#888">230</text>
<line x1="570.5809999999999" y1="101.5" x2="570.5809999999999" y2="104.2" stroke="#cfcfcf" stroke-width="0.5"/>
<line x1="579.104" y1="96" x2="579.104" y2="104.2" stroke="#cfcfcf" stroke-width="0.5"/>
<text x="580.604" y="101.3" font-size="4.8" fill="#888">240</text>
<line x1="587.627" y1="101.5" x2="587.627" y2="104.2" stroke="#cfcfcf" stroke-width="0.5"/>
<line x1="596.15" y1="96" x2="596.15" y2="104.2" stroke="#cfcfcf" stroke-width="0.5"/>
<text x="597.65" y="101.3" font-size="4.8" fill="#888">250</text>
<line x1="604.673" y1="101.5" x2="604.673" y2="104.2" stroke="#cfcfcf" stroke-width="0.5"/>
<line x1="613.1959999999999" y1="96" x2="613.1959999999999" y2="104.2" stroke="#cfcfcf" stroke-width="0.5"/>
<text x="614.6959999999999" y="101.3" font-size="4.8" fill="#888">260</text>
<line x1="621.719" y1="101.5" x2="621.719" y2="104.2" stroke="#cfcfcf" stroke-width="0.5"/>
<line x1="630.242" y1="96" x2="630.242" y2="104.2" stroke="#cfcfcf" stroke-width="0.5"/>
<text x="631.742" y="101.3" font-size="4.8" fill="#888">270</text>
<line x1="638.765" y1="101.5" x2="638.765" y2="104.2" stroke="#cfcfcf" stroke-width="0.5"/>
<line x1="647.288" y1="96" x2="647.288" y2="104.2" stroke="#cfcfcf" stroke-width="0.5"/>
<text x="648.788" y="101.3" font-size="4.8" fill="#888">280</text>
<line x1="655.8109999999999" y1="101.5" x2="655.8109999999999" y2="104.2" stroke="#cfcfcf" stroke-width="0.5"/>
<line x1="664.334" y1="96" x2="664.334" y2="104.2" stroke="#cfcfcf" stroke-width="0.5"/>
<text x="665.834" y="101.3" font-size="4.8" fill="#888">290</text>
<line x1="157.3" y1="104.2" x2="166.5" y2="104.2" stroke="#cfcfcf" stroke-width="0.5"/>
<text transform="translate(162.2,104.8) rotate(-90)" text-anchor="end" font-size="4.8" fill="#888">40</text>
<line x1="164" y1="112.723" x2="166.5" y2="112.723" stroke="#cfcfcf" stroke-width="0.5"/>
<line x1="157.3" y1="121.246" x2="166.5" y2="121.246" stroke="#cfcfcf" stroke-width="0.5"/>
<text transform="translate(162.2,121.84599999999999) rotate(-90)" text-anchor="end" font-size="4.8" fill="#888">50</text>
<line x1="164" y1="129.769" x2="166.5" y2="129.769" stroke="#cfcfcf" stroke-width="0.5"/>
<line x1="157.3" y1="138.292" x2="166.5" y2="138.292" stroke="#cfcfcf" stroke-width="0.5"/>
<text transform="translate(162.2,138.892) rotate(-90)" text-anchor="end" font-size="4.8" fill="#888">60</text>
<line x1="164" y1="146.815" x2="166.5" y2="146.815" stroke="#cfcfcf" stroke-width="0.5"/>
<line x1="157.3" y1="155.338" x2="166.5" y2="155.338" stroke="#cfcfcf" stroke-width="0.5"/>
<text transform="translate(162.2,155.938) rotate(-90)" text-anchor="end" font-size="4.8" fill="#888">70</text>
<line x1="164" y1="163.861" x2="166.5" y2="163.861" stroke="#cfcfcf" stroke-width="0.5"/>
<line x1="157.3" y1="172.38400000000001" x2="166.5" y2="172.38400000000001" stroke="#cfcfcf" stroke-width="0.5"/>
<text transform="translate(162.2,172.984) rotate(-90)" text-anchor="end" font-size="4.8" fill="#888">80</text>
<line x1="164" y1="180.90699999999998" x2="166.5" y2="180.90699999999998" stroke="#cfcfcf" stroke-width="0.5"/>
<line x1="157.3" y1="189.43" x2="166.5" y2="189.43" stroke="#cfcfcf" stroke-width="0.5"/>
<text transform="translate(162.2,190.03) rotate(-90)" text-anchor="end" font-size="4.8" fill="#888">90</text>
<line x1="164" y1="197.95299999999997" x2="166.5" y2="197.95299999999997" stroke="#cfcfcf" stroke-width="0.5"/>
<line x1="157.3" y1="206.476" x2="166.5" y2="206.476" stroke="#cfcfcf" stroke-width="0.5"/>
<text transform="translate(162.2,207.076) rotate(-90)" text-anchor="end" font-size="4.8" fill="#888">100</text>
<line x1="164" y1="214.99899999999997" x2="166.5" y2="214.99899999999997" stroke="#cfcfcf" stroke-width="0.5"/>
<line x1="157.3" y1="223.522" x2="166.5" y2="223.522" stroke="#cfcfcf" stroke-width="0.5"/>
<text transform="translate(162.2,224.12199999999999) rotate(-90)" text-anchor="end" font-size="4.8" fill="#888">110</text>
<line x1="164" y1="232.04500000000002" x2="166.5" y2="232.04500000000002" stroke="#cfcfcf" stroke-width="0.5"/>
<line x1="157.3" y1="240.56799999999998" x2="166.5" y2="240.56799999999998" stroke="#cfcfcf" stroke-width="0.5"/>
<text transform="translate(162.2,241.16799999999998) rotate(-90)" text-anchor="end" font-size="4.8" fill="#888">120</text>
<line x1="164" y1="249.091" x2="166.5" y2="249.091" stroke="#cfcfcf" stroke-width="0.5"/>
<line x1="157.3" y1="257.614" x2="166.5" y2="257.614" stroke="#cfcfcf" stroke-width="0.5"/>
<text transform="translate(162.2,258.214) rotate(-90)" text-anchor="end" font-size="4.8" fill="#888">130</text>
<line x1="164" y1="266.137" x2="166.5" y2="266.137" stroke="#cfcfcf" stroke-width="0.5"/>
<line x1="157.3" y1="274.65999999999997" x2="166.5" y2="274.65999999999997" stroke="#cfcfcf" stroke-width="0.5"/>
<text transform="translate(162.2,275.26) rotate(-90)" text-anchor="end" font-size="4.8" fill="#888">140</text>
<line x1="164" y1="283.183" x2="166.5" y2="283.183" stroke="#cfcfcf" stroke-width="0.5"/>
<line x1="157.3" y1="291.706" x2="166.5" y2="291.706" stroke="#cfcfcf" stroke-width="0.5"/>
<text transform="translate(162.2,292.30600000000004) rotate(-90)" text-anchor="end" font-size="4.8" fill="#888">150</text>
<line x1="164" y1="300.229" x2="166.5" y2="300.229" stroke="#cfcfcf" stroke-width="0.5"/>
<line x1="157.3" y1="308.752" x2="166.5" y2="308.752" stroke="#cfcfcf" stroke-width="0.5"/>
<text transform="translate(162.2,309.35200000000003) rotate(-90)" text-anchor="end" font-size="4.8" fill="#888">160</text>
<line x1="164" y1="317.275" x2="166.5" y2="317.275" stroke="#cfcfcf" stroke-width="0.5"/>
<line x1="157.3" y1="325.798" x2="166.5" y2="325.798" stroke="#cfcfcf" stroke-width="0.5"/>
<text transform="translate(162.2,326.398) rotate(-90)" text-anchor="end" font-size="4.8" fill="#888">170</text>
<line x1="164" y1="334.321" x2="166.5" y2="334.321" stroke="#cfcfcf" stroke-width="0.5"/>
<line x1="157.3" y1="342.844" x2="166.5" y2="342.844" stroke="#cfcfcf" stroke-width="0.5"/>
<text transform="translate(162.2,343.444) rotate(-90)" text-anchor="end" font-size="4.8" fill="#888">180</text>
<line x1="164" y1="351.367" x2="166.5" y2="351.367" stroke="#cfcfcf" stroke-width="0.5"/>
<line x1="157.3" y1="359.89" x2="166.5" y2="359.89" stroke="#cfcfcf" stroke-width="0.5"/>
<text transform="translate(162.2,360.49) rotate(-90)" text-anchor="end" font-size="4.8" fill="#888">190</text>
<line x1="164" y1="368.413" x2="166.5" y2="368.413" stroke="#cfcfcf" stroke-width="0.5"/>
<line x1="157.3" y1="376.936" x2="166.5" y2="376.936" stroke="#cfcfcf" stroke-width="0.5"/>
<text transform="translate(162.2,377.536) rotate(-90)" text-anchor="end" font-size="4.8" fill="#888">200</text>
<line x1="164" y1="385.459" x2="166.5" y2="385.459" stroke="#cfcfcf" stroke-width="0.5"/>
<rect x="167" y="104.7" width="506" height="286" fill="#f3f3f3"/>
<rect x="168.6" y="104.7" width="1.6" height="286" fill="#cdcdcd"/>
<rect x="673" y="96" width="8.5" height="295" fill="#ececec"/>
<rect x="673.4" y="96.4" width="7.8" height="7.9" fill="#fff" stroke="#d0d0d0" stroke-width="0.5"/><path d="M675.5 101.5 l1.8 -2 l1.8 2z" fill="#333"/>
<rect x="674" y="180" width="7" height="153" fill="#fff" stroke="#d7d7d7" stroke-width="0.5"/>
<rect x="673.6" y="382.4" width="7.9" height="7.9" fill="#fff" stroke="#d0d0d0" stroke-width="0.5"/><path d="M675.7 385.3 l1.8 2 l1.8 -2z" fill="#333"/>
<rect x="157" y="390.7" width="524.5" height="8.3" fill="#ececec"/>
<rect x="157.8" y="391.2" width="8.5" height="8" fill="#fff" stroke="#d0d0d0" stroke-width="0.5"/><path d="M163.2 393.2 l-2 2 l2 2z" fill="#333"/>
<rect x="277.5" y="391.5" width="268" height="7" fill="#fff" stroke="#d0d0d0" stroke-width="0.5"/>
<rect x="664.4" y="390.8" width="8.3" height="8.2" fill="#fff" stroke="#d0d0d0" stroke-width="0.5"/><path d="M667.3 393 l2 2 l-2 2z" fill="#333"/>
<defs><clipPath id="cR"><circle cx="412.9" cy="173" r="64.2"/></clipPath><clipPath id="cT"><circle cx="370" cy="241.4" r="64.2"/></clipPath><clipPath id="cB"><circle cx="455.8" cy="241.4" r="64.2"/></clipPath></defs>
<circle cx="412.9" cy="173" r="64.8" fill="#ffffff"/>
<circle cx="370" cy="241.4" r="64.8" fill="#ffffff"/>
<circle cx="455.8" cy="241.4" r="64.8" fill="#ffffff"/>
<circle cx="412.9" cy="173" r="64.2" fill="#e64b55"/>
<circle cx="370" cy="241.4" r="64.2" fill="#10aeaa"/>
<circle cx="455.8" cy="241.4" r="64.2" fill="#135b82"/>
<g clip-path="url(#cR)"><circle cx="370" cy="241.4" r="64.2" fill="#f4f4f4"/><circle cx="455.8" cy="241.4" r="64.2" fill="#f4f4f4"/></g>
<g clip-path="url(#cT)"><circle cx="455.8" cy="241.4" r="64.2" fill="#f4f4f4"/></g>
<g clip-path="url(#cR)"><g clip-path="url(#cT)"><circle cx="455.8" cy="241.4" r="64.2" fill="#f29a4f"/></g></g>
<circle cx="412.9" cy="173" r="64.2" fill="none" stroke="#ffffff" stroke-width="1.3"/>
<circle cx="370" cy="241.4" r="64.2" fill="none" stroke="#ffffff" stroke-width="1.3"/>
<circle cx="455.8" cy="241.4" r="64.2" fill="none" stroke="#ffffff" stroke-width="1.3"/>
<text x="367" y="204" font-size="8.4" fill="#3f6f9f" textLength="32" lengthAdjust="spacingAndGlyphs">Example</text>
<text x="376.3" y="214" font-size="8.4" fill="#3f6f9f" textLength="15.5" lengthAdjust="spacingAndGlyphs">Text</text>
<text x="427.8" y="204" font-size="8.4" fill="#3f6f9f" textLength="32" lengthAdjust="spacingAndGlyphs">Example</text>
<text x="436.8" y="214" font-size="8.4" fill="#3f6f9f" textLength="15.5" lengthAdjust="spacingAndGlyphs">Text</text>
<text x="396.4" y="259.9" font-size="8.4" fill="#3f6f9f" textLength="32.4" lengthAdjust="spacingAndGlyphs">Example</text>
<text x="405.7" y="269.8" font-size="8.4" fill="#3f6f9f" textLength="15.1" lengthAdjust="spacingAndGlyphs">Text</text>
<circle cx="356.6" cy="137.6" r="20.8" fill="#ffffff"/><circle cx="356.6" cy="137.6" r="18.2" fill="#e64b55"/><circle cx="356.6" cy="137.6" r="10.1" fill="none" stroke="#fff" stroke-width="0.95"/>
<path d="M356.13 127.69 L355.63 130.58 L358.80 129.88 L358.21 132.86 L361.29 132.24 L360.61 135.31 L363.60 134.78 L362.83 137.93 L365.73 137.49" stroke="#fff" stroke-width="1" fill="none"/>
<path d="M349.32 135.68 L348.53 138.87 L351.45 138.35 L350.75 141.45 L353.77 140.83 L353.15 143.85 L356.25 143.15 L355.73 146.07 L358.92 145.28" stroke="#fff" stroke-width="1" fill="none"/>
<circle cx="325.9" cy="286.4" r="20.8" fill="#ffffff"/><circle cx="325.9" cy="286.4" r="18.2" fill="#10aeaa"/><circle cx="325.9" cy="286.4" r="10.1" fill="none" stroke="#fff" stroke-width="0.95"/>
<g stroke="#fff" stroke-width="0.9" fill="none"><path d="M324.3 276.6 Q325.5 285 335.6 286.6"/><path d="M316.1 285.6 Q325 286.5 326.6 296.1"/></g>
<circle cx="519.3" cy="234.6" r="20.8" fill="#ffffff"/><circle cx="519.3" cy="234.6" r="18.2" fill="#135b82"/><circle cx="519.3" cy="234.6" r="10.1" fill="none" stroke="#fff" stroke-width="0.95"/>
<g stroke="#fff" stroke-width="0.85" fill="none"><path d="M511.9 240.8 L526 228.4"/><path d="M511 229.2 Q521 232.5 524.8 243"/><path d="M518.2 224.8 Q521.2 232 528.6 234.6"/><path d="M509.4 234 Q516.5 236 519.6 244.4"/></g>
<text x="233.7" y="130.7" font-size="10.8" fill="#e64b55" font-weight="bold" textLength="75.6" lengthAdjust="spacingAndGlyphs">Add text here !</text>
<text x="233.7" y="142.1" font-size="8.6" fill="#808080" textLength="88.5" lengthAdjust="spacingAndGlyphs">Replace your text here!</text>
<text x="233.7" y="152.4" font-size="8.6" fill="#808080" textLength="88.5" lengthAdjust="spacingAndGlyphs">Replace your text here!</text>
<text x="204" y="279.7" font-size="10.8" fill="#10aeaa" font-weight="bold" textLength="75.6" lengthAdjust="spacingAndGlyphs">Add text here !</text>
<text x="204" y="291" font-size="8.6" fill="#808080" textLength="88.2" lengthAdjust="spacingAndGlyphs">Replace your text here!</text>
<text x="204" y="301" font-size="8.6" fill="#808080" textLength="88.2" lengthAdjust="spacingAndGlyphs">Replace your text here!</text>
<text x="543.3" y="227.4" font-size="10.8" fill="#135b82" font-weight="bold" textLength="75.6" lengthAdjust="spacingAndGlyphs">Add text here !</text>
<text x="543.3" y="239.1" font-size="8.6" fill="#808080" textLength="88.1" lengthAdjust="spacingAndGlyphs">Replace your text here!</text>
<text x="543.3" y="249.1" font-size="8.6" fill="#808080" textLength="88.1" lengthAdjust="spacingAndGlyphs">Replace your text here!</text>
<text x="230" y="350.7" font-size="10.7" fill="#f29a4f" font-weight="bold" textLength="118.4" lengthAdjust="spacingAndGlyphs">Replace your text here!</text>
<text x="230" y="361.4" font-size="6.9" fill="#666" textLength="71" lengthAdjust="spacingAndGlyphs">Replace your text here!</text>
<text x="307.2" y="361.4" font-size="6.9" fill="#666" textLength="71" lengthAdjust="spacingAndGlyphs">Replace your text here!</text>
<text x="378.2" y="361.4" font-size="6.9" fill="#666" textLength="71" lengthAdjust="spacingAndGlyphs">Replace your text here!</text>
<text x="455.9" y="361.4" font-size="6.9" fill="#666" textLength="71" lengthAdjust="spacingAndGlyphs">Replace your text here!</text>
<text x="533.2" y="361.4" font-size="6.9" fill="#666" textLength="71" lengthAdjust="spacingAndGlyphs">Replace your text here!</text>
<text x="230" y="369.7" font-size="6.9" fill="#666" textLength="71" lengthAdjust="spacingAndGlyphs">Replace your text here!</text>
<rect x="682" y="95.5" width="17.5" height="322" fill="#ffffff"/>
<line x1="682.3" y1="95.5" x2="682.3" y2="391" stroke="#e0e0e0" stroke-width="0.5"/>
<rect x="684" y="96.3" width="15" height="14.7" fill="#b9cde6"/>
<path d="M688 105 q0 -5 3 -5.5 q3 0.5 3 5.5z" fill="#eee" stroke="#777" stroke-width="0.5"/><path d="M693 101 l2.5 1.5 v3.5 l-1.5 0.5z" fill="#e8508a"/><rect x="687" y="106.3" width="9.5" height="1.6" fill="#111"/>
<rect x="686.5" y="117.5" width="8.5" height="6.5" fill="#fff" stroke="#3b7dc4" stroke-width="0.6"/><path d="M690 123 L695 116.5" stroke="#f2a516" stroke-width="1.2"/><rect x="686" y="124.3" width="10" height="1.6" fill="#111"/>
<rect x="685.8" y="132" width="10.5" height="10.5" fill="#5ec7c0"/>
<rect x="686" y="149.4" width="10" height="8" fill="#fff" stroke="#2f6fb7" stroke-width="0.5"/><path d="M686 157.4 l3 -4 l2.5 2 l2 -1.5 l2.5 3.5z" fill="#2f6fb7"/><circle cx="694" cy="151.5" r="0.9" fill="#f2a516"/>
<rect x="685.8" y="164.3" width="7.5" height="7.5" fill="#2f6fb7"/><rect x="688.5" y="167.3" width="8" height="8.3" fill="#f2c86e"/>
<rect x="686.5" y="181" width="8.5" height="10.5" fill="#fff" stroke="#2f6fb7" stroke-width="0.6"/><path d="M688 183.5 h5.5 M688 185.5 h5.5 M688 187.5 h5.5 M688 189.5 h5.5" stroke="#e84a5f" stroke-width="0.5"/>
<circle cx="690" cy="202.5" r="4.5" fill="#2f6fb7"/><path d="M687.5 200 q2 1 1 3 q2 1 3 -1" stroke="#fff" stroke-width="0.6" fill="none"/><ellipse cx="693.5" cy="206.5" rx="3" ry="1.5" fill="#f2c86e"/>
<path d="M686.5 214.5 h6 l2.5 2.5 v8 h-8.5z" fill="#fff" stroke="#2f6fb7" stroke-width="0.6"/><path d="M688 223 l5 -5" stroke="#2f6fb7" stroke-width="0.8"/>
<path d="M686 232 h10 v7 h-6 l-2.5 2.5 v-2.5 h-1.5z" fill="#fff" stroke="#2f6fb7" stroke-width="0.7"/><path d="M688 235.5 h1 M690.5 235.5 h1 M693 235.5 h1" stroke="#2f6fb7" stroke-width="0.9"/>
<circle cx="690.8" cy="253.6" r="4.8" fill="#2f6fb7"/>
<text x="690.8" y="256.3" font-size="7.5" fill="#fff" font-weight="bold" text-anchor="middle">?</text>
<rect x="699.6" y="99" width="1.4" height="3" fill="#e8508a"/>
<rect x="699.6" y="117.5" width="1.4" height="2.9000000000000057" fill="#555"/>
<rect x="699.6" y="128" width="1.4" height="8" fill="#8fd8d0"/>
<rect x="699.6" y="146" width="1.4" height="2.6999999999999886" fill="#9bbde0"/>
<rect x="699.6" y="162" width="1.4" height="6" fill="#f2d49e"/>
<rect x="699.6" y="200" width="1.4" height="4" fill="#f2c86e"/>
<rect x="699.6" y="218" width="1.4" height="4" fill="#9bbde0"/>
<rect x="699.6" y="232" width="1.4" height="4" fill="#9bbde0"/>
<path d="M160.5 407 l3 -2.8 l3 2.8" fill="none" stroke="#2f6fb7" stroke-width="1"/>
<line x1="170.5" y1="401.5" x2="170.5" y2="408.5" stroke="#aaa" stroke-width="0.5"/>
<text x="172" y="407.8" font-size="6.8" fill="#222" textLength="18" lengthAdjust="spacingAndGlyphs">Page-1</text>
<path d="M226 404.5 h2 l-1 1.2z" fill="#555"/>
<line x1="232" y1="401.5" x2="232" y2="408.5" stroke="#aaa" stroke-width="0.6"/>
<path d="M240 401.8 v6.8 M236.6 405.2 h6.8" stroke="#1fa84a" stroke-width="1.4"/>
<line x1="247.5" y1="401.5" x2="247.5" y2="408.5" stroke="#ccc" stroke-width="0.6"/>
<text x="254" y="407.8" font-size="6.8" fill="#2f6fb7" textLength="18" lengthAdjust="spacingAndGlyphs">Page-1</text>
<text x="157" y="416.3" font-size="6" fill="#333" textLength="13.5" lengthAdjust="spacingAndGlyphs" stroke="#333" stroke-width="0.22">りつぶ</text>
<rect x="171.0" y="410.3" width="4.61" height="6.7" fill="#c0001c"/>
<rect x="176.51" y="410.3" width="4.61" height="6.7" fill="#e00018"/>
<rect x="182.02" y="410.3" width="4.61" height="6.7" fill="#c85080"/>
<rect x="187.53" y="410.3" width="4.61" height="6.7" fill="#e04a60"/>
<rect x="193.04" y="410.3" width="4.61" height="6.7" fill="#e87070"/>
<rect x="198.56" y="410.3" width="4.61" height="6.7" fill="#e850a0"/>
<rect x="204.07" y="410.3" width="4.61" height="6.7" fill="#e8a0c0"/>
<rect x="209.58" y="410.3" width="4.61" height="6.7" fill="#f08878"/>
<rect x="215.09" y="410.3" width="4.61" height="6.7" fill="#f0a0b0"/>
<rect x="220.6" y="410.3" width="4.61" height="6.7" fill="#f89060"/>
<rect x="226.11" y="410.3" width="4.61" height="6.7" fill="#f0a080"/>
<rect x="231.62" y="410.3" width="4.61" height="6.7" fill="#f5b0b0"/>
<rect x="237.13" y="410.3" width="4.61" height="6.7" fill="#e8d8f0"/>
<rect x="242.65" y="410.3" width="4.61" height="6.7" fill="#fcd0e0"/>
<rect x="248.16" y="410.3" width="4.61" height="6.7" fill="#fde0e0"/>
<rect x="253.67" y="410.3" width="4.61" height="6.7" fill="#102048"/>
<rect x="259.18" y="410.3" width="4.61" height="6.7" fill="#203878"/>
<rect x="264.69" y="410.3" width="4.61" height="6.7" fill="#402888"/>
<rect x="270.2" y="410.3" width="4.61" height="6.7" fill="#0048a0"/>
<rect x="275.71" y="410.3" width="4.61" height="6.7" fill="#0070b8"/>
<rect x="281.22" y="410.3" width="4.61" height="6.7" fill="#3050b8"/>
<rect x="286.74" y="410.3" width="4.61" height="6.7" fill="#5080c8"/>
<rect x="292.25" y="410.3" width="4.61" height="6.7" fill="#0078d0"/>
<rect x="297.76" y="410.3" width="4.61" height="6.7" fill="#0890d0"/>
<rect x="303.27" y="410.3" width="4.61" height="6.7" fill="#20a0d8"/>
<rect x="308.78" y="410.3" width="4.61" height="6.7" fill="#00b0f0"/>
<rect x="314.29" y="410.3" width="4.61" height="6.7" fill="#20b8f0"/>
<rect x="319.8" y="410.3" width="4.61" height="6.7" fill="#90c8f0"/>
<rect x="325.31" y="410.3" width="4.61" height="6.7" fill="#a8d8f0"/>
<rect x="330.83" y="410.3" width="4.61" height="6.7" fill="#d0e8f8"/>
<rect x="336.34" y="410.3" width="4.61" height="6.7" fill="#004028"/>
<rect x="341.85" y="410.3" width="4.61" height="6.7" fill="#006030"/>
<rect x="347.36" y="410.3" width="4.61" height="6.7" fill="#006868"/>
<rect x="352.87" y="410.3" width="4.61" height="6.7" fill="#607020"/>
<rect x="358.38" y="410.3" width="4.61" height="6.7" fill="#008048"/>
<rect x="363.89" y="410.3" width="4.61" height="6.7" fill="#20a040"/>
<rect x="369.4" y="410.3" width="4.61" height="6.7" fill="#00a8a0"/>
<rect x="374.92" y="410.3" width="4.61" height="6.7" fill="#60c0c8"/>
<rect x="380.43" y="410.3" width="4.61" height="6.7" fill="#20c8a8"/>
<rect x="385.94" y="410.3" width="4.61" height="6.7" fill="#50c080"/>
<rect x="391.45" y="410.3" width="4.61" height="6.7" fill="#00b050"/>
<rect x="396.96" y="410.3" width="4.61" height="6.7" fill="#80b810"/>
<rect x="402.47" y="410.3" width="4.61" height="6.7" fill="#a0d070"/>
<rect x="407.98" y="410.3" width="4.61" height="6.7" fill="#b8d840"/>
<rect x="413.49" y="410.3" width="4.61" height="6.7" fill="#d0e8c8"/>
<rect x="419.01" y="410.3" width="4.61" height="6.7" fill="#e05020"/>
<rect x="424.52" y="410.3" width="4.61" height="6.7" fill="#f06000"/>
<rect x="430.03" y="410.3" width="4.61" height="6.7" fill="#f08000"/>
<rect x="435.54" y="410.3" width="4.61" height="6.7" fill="#f09050"/>
<rect x="441.05" y="410.3" width="4.61" height="6.7" fill="#f0a000"/>
<rect x="446.56" y="410.3" width="4.61" height="6.7" fill="#ffa800"/>
<rect x="452.07" y="410.3" width="4.61" height="6.7" fill="#ffb030"/>
<rect x="457.58" y="410.3" width="4.61" height="6.7" fill="#f0c030"/>
<rect x="463.1" y="410.3" width="4.61" height="6.7" fill="#ffd000"/>
<rect x="468.61" y="410.3" width="4.61" height="6.7" fill="#ffe000"/>
<rect x="474.12" y="410.3" width="4.61" height="6.7" fill="#fff080"/>
<rect x="479.63" y="410.3" width="4.61" height="6.7" fill="#ffc870"/>
<rect x="485.14" y="410.3" width="4.61" height="6.7" fill="#e8c890"/>
<rect x="490.65" y="410.3" width="4.61" height="6.7" fill="#ffd8b0"/>
<rect x="496.16" y="410.3" width="4.61" height="6.7" fill="#fee8d0"/>
<rect x="501.67" y="410.3" width="4.61" height="6.7" fill="#802080"/>
<rect x="507.19" y="410.3" width="4.61" height="6.7" fill="#903090"/>
<rect x="512.7" y="410.3" width="4.61" height="6.7" fill="#6030a8"/>
<rect x="518.21" y="410.3" width="4.61" height="6.7" fill="#7040a8"/>
<rect x="523.72" y="410.3" width="4.61" height="6.7" fill="#a068b0"/>
<rect x="529.23" y="410.3" width="4.61" height="6.7" fill="#a04880"/>
<rect x="534.74" y="410.3" width="4.61" height="6.7" fill="#e888b8"/>
<rect x="540.25" y="410.3" width="4.61" height="6.7" fill="#a898e0"/>
<rect x="545.76" y="410.3" width="4.61" height="6.7" fill="#d8b8e0"/>
<rect x="551.28" y="410.3" width="4.61" height="6.7" fill="#f0c8e0"/>
<rect x="556.79" y="410.3" width="4.61" height="6.7" fill="#602010"/>
<rect x="562.3" y="410.3" width="4.61" height="6.7" fill="#803020"/>
<rect x="567.81" y="410.3" width="4.61" height="6.7" fill="#a04820"/>
<rect x="573.32" y="410.3" width="4.61" height="6.7" fill="#c05818"/>
<rect x="578.83" y="410.3" width="4.61" height="6.7" fill="#d08040"/>
<rect x="584.34" y="410.3" width="4.61" height="6.7" fill="#c09070"/>
<rect x="589.85" y="410.3" width="4.61" height="6.7" fill="#f0c080"/>
<rect x="595.37" y="410.3" width="4.61" height="6.7" fill="#d8d0d0"/>
<rect x="600.88" y="410.3" width="4.61" height="6.7" fill="#d0d8d0"/>
<rect x="606.39" y="410.3" width="4.61" height="6.7" fill="#000000"/>
<rect x="611.9" y="410.3" width="4.61" height="6.7" fill="#302828"/>
<rect x="617.41" y="410.3" width="4.61" height="6.7" fill="#505050"/>
<rect x="622.92" y="410.3" width="4.61" height="6.7" fill="#686868"/>
<rect x="628.43" y="410.3" width="4.61" height="6.7" fill="#888888"/>
<rect x="633.94" y="410.3" width="4.61" height="6.7" fill="#999999"/>
<rect x="639.46" y="410.3" width="4.61" height="6.7" fill="#b0b0b0"/>
<rect x="644.97" y="410.3" width="4.61" height="6.7" fill="#c8c8c8"/>
<rect x="650.48" y="410.3" width="4.61" height="6.7" fill="#dcdcdc"/>
<rect x="655.99" y="410.3" width="4.61" height="6.7" fill="#ececec"/>
<rect x="29" y="417.3" width="672" height="17.7" fill="#2f5e8c"/>
<rect x="29" y="431.8" width="672" height="0.6" fill="#2a5682"/>
<rect x="29" y="417.3" width="1.3" height="17.7" fill="#27507a"/>
<text x="35.7" y="427.8" font-size="7" fill="#e4eaf1" textLength="69" lengthAdjust="spacingAndGlyphs" text-decoration="underline">http://www.edrawsoft.cn/</text>
<text x="108.6" y="427.8" font-size="7" fill="#ffffff" textLength="23.7" lengthAdjust="spacingAndGlyphs" stroke="#ffffff" stroke-width="0.22">ページ1/1</text>
<rect x="532.8" y="420" width="9.4" height="9" fill="#7f9fc0"/>
<rect x="534.3" y="421.5" width="6.4" height="6" fill="none" stroke="#dfe8f2" stroke-width="0.6"/>
<rect x="544" y="420.5" width="6.5" height="8" fill="none" stroke="#dfe8f2" stroke-width="0.6"/><path d="M545 423 h4.5 M545 425.5 h4.5" stroke="#dfe8f2" stroke-width="0.5"/>
<path d="M553 421 h6.5 M554 421 v3.5 h4.5 v-3.5 M556.3 424.5 v3 M554.5 428.5 h3.5" fill="none" stroke="#dfe8f2" stroke-width="0.7"/>
<path d="M563.5 424.9 h4" stroke="#aac0d8" stroke-width="0.8"/>
<rect x="571.7" y="424.3" width="45.6" height="1.7" fill="#9fb6cf"/>
<rect x="580.4" y="421.4" width="3.3" height="6.4" fill="#e8eef5"/>
<path d="M619.8 424.9 h4.5 M622 422.6 v4.6" stroke="#aac0d8" stroke-width="0.8"/>
<text x="630.8" y="428" font-size="7.5" fill="#e8eef4" font-weight="bold" textLength="12.3" lengthAdjust="spacingAndGlyphs">90%</text>
<path d="M646.8 424.5 h1.8 l-0.9 1z" fill="#7f9fc0"/>
<rect x="653" y="421" width="5.7" height="6.5" fill="none" stroke="#c7d5e4" stroke-width="0.8"/><rect x="654.5" y="422.5" width="2.7" height="3.5" fill="#dfe8f2"/>
<rect x="662" y="421" width="7" height="6.5" fill="none" stroke="#c7d5e4" stroke-width="0.7"/><path d="M662 424.2 h7 M665.5 421 v6.5" stroke="#c7d5e4" stroke-width="0.6"/>
<circle cx="674.5" cy="423.5" r="2.2" fill="none" stroke="#dfe8f2" stroke-width="0.8"/><path d="M676 425 l2.2 2.2" stroke="#dfe8f2" stroke-width="1"/>
<rect x="681.4" y="421" width="6.6" height="6.6" fill="#aec2d8"/><path d="M681.4 423.2 h6.6 M681.4 425.4 h6.6" stroke="#2d5d8c" stroke-width="0.4"/>
<g fill="#dfe8f2"><rect x="697.5" y="427" width="1" height="1"/><rect x="695.5" y="429" width="1" height="1"/><rect x="697.5" y="429" width="1" height="1"/><rect x="693.5" y="431" width="1" height="1"/></g>
<rect x="550.5" y="433.6" width="8.5" height="1.4" fill="#9fb3c8"/>
<rect x="561" y="433.6" width="4.5" height="1.4" fill="#9fb3c8"/>
<rect x="571" y="433.6" width="4.5" height="1.4" fill="#9fb3c8"/>
<rect x="595" y="433.6" width="2" height="1.4" fill="#9fb3c8"/>
<rect x="631.4" y="433.6" width="11" height="1.4" fill="#9fb3c8"/>
<rect x="659" y="433.6" width="7" height="1.4" fill="#9fb3c8"/>
<rect x="676" y="433.6" width="3" height="1.4" fill="#9fb3c8"/>
<rect x="690" y="433.6" width="5" height="1.4" fill="#9fb3c8"/>
<rect x="35" y="433.6" width="3" height="1.4" fill="#9fb3c8"/>
<rect x="50" y="433.6" width="3" height="1.4" fill="#9fb3c8"/>
<rect x="70" y="433.6" width="2" height="1.4" fill="#9fb3c8"/>
<rect x="93" y="433.6" width="7" height="1.4" fill="#9fb3c8"/>
<rect x="120" y="433.6" width="9" height="1.4" fill="#9fb3c8"/>
<rect x="2.6" y="12.4" width="24" height="24" rx="2.5" fill="#9c3338" stroke="#8c3a40" stroke-width="0.7"/>
<path d="M4 30.4 q8 -14 21 -12 v-3 q-12 -3 -21 9z" fill="#b04a50" opacity="0.6"/>
<circle cx="14.6" cy="24.4" r="7.4" fill="#fff"/><circle cx="14.6" cy="24.4" r="3.7" fill="none" stroke="#7a1f24" stroke-width="1.3"/><circle cx="10.2" cy="24.4" r="1.9" fill="#fff"/><circle cx="16.8" cy="20.6" r="1.9" fill="#fff"/><circle cx="16.8" cy="28.200000000000003" r="1.9" fill="#fff"/><circle cx="10.2" cy="24.4" r="1.2" fill="#7a1f24"/><circle cx="16.8" cy="20.6" r="1.2" fill="#7a1f24"/><circle cx="16.8" cy="28.200000000000003" r="1.2" fill="#7a1f24"/>
<rect x="2.6" y="39.46" width="24" height="24" rx="2.5" fill="#7e2a30" stroke="#8c3a40" stroke-width="0.7"/>
<rect x="5.5" y="42.46" width="18" height="18" rx="1.5" fill="#b7b4ae"/><rect x="5.5" y="42.46" width="18" height="6" fill="#e9e6e0"/><rect x="6.5" y="44.46" width="16" height="2" fill="#e07b3a"/><rect x="12" y="51.96" width="5" height="3" rx="0.6" fill="none" stroke="#eee" stroke-width="0.7"/>
<rect x="2.6" y="66.52" width="24" height="24" rx="2.5" fill="#7a2930" stroke="#8c3a40" stroke-width="0.7"/>
<circle cx="14.6" cy="78.52" r="9.6" fill="#f07a1e"/><circle cx="15.8" cy="77.52" r="6.3" fill="#2b4f9e"/><path d="M5.5 74.52 q2 -6 9 -6.5 q-4 3 -3.5 6 q2 -1.5 4.5 0 q-3 2 -2 5 q1 3 4 3 q4 0 6 -4 q-0.5 8 -9 9 q-8 -0.5 -9 -9.5z" fill="#f26522"/><path d="M19 70.02 q5 2.5 5.5 8" stroke="#ffcb2a" stroke-width="1.5" fill="none"/>
<rect x="2.6" y="93.58" width="24" height="24" rx="2.5" fill="#7a2930" stroke="#8c3a40" stroke-width="0.7"/>
<path d="M6.5 96.08 h11.5 l4.5 4.5 v16 h-16z" fill="#f4f6f8" stroke="#2f72b8" stroke-width="1.1"/><path d="M18 96.08 v4.5 h4.5" fill="#c9dbef" stroke="#2f72b8" stroke-width="0.6"/><rect x="8.5" y="102.58" width="11" height="1.2" fill="#3a7fc0"/><rect x="8.5" y="105.08" width="5" height="1.2" fill="#3a7fc0"/><rect x="14.5" y="104.08" width="5.5" height="4" fill="#4a8fd0"/><path d="M14.5 108.08 l2 -2 l1.5 1 l2 -2 v3z" fill="#222"/><rect x="8.5" y="109.58" width="11" height="1.1" fill="#3a7fc0"/><rect x="8.5" y="111.78" width="11" height="1.1" fill="#3a7fc0"/>
<rect x="2.6" y="120.64" width="24" height="24" rx="2.5" fill="#7a2930" stroke="#8c3a40" stroke-width="0.7"/>
<path d="M6.5 123.14 h11.5 l4.5 4.5 v16 h-16z" fill="#f4f8f4" stroke="#3aa83a" stroke-width="1.1"/><path d="M18 123.14 v4.5 h4.5" fill="#cfe9cf" stroke="#3aa83a" stroke-width="0.6"/><rect x="8.5" y="129.64" width="11" height="10" fill="#4cae4c"/><path d="M8.5 132.14 h11 M8.5 134.64 h11 M8.5 137.14 h11 M12 129.64 v10 M15.7 129.64 v10" stroke="#fff" stroke-width="0.7"/><path d="M17 139.64 v-4 h3z" fill="#e8752a"/>
<rect x="2.6" y="147.7" width="24" height="24" rx="2.5" fill="#7a2930" stroke="#8c3a40" stroke-width="0.7"/>
<path d="M6.5 150.2 h11.5 l4.5 4.5 v16 h-16z" fill="#f8f4f0" stroke="#e0762e" stroke-width="1.1"/><path d="M18 150.2 v4.5 h4.5" fill="#f5dcc6" stroke="#e0762e" stroke-width="0.6"/><rect x="8.5" y="157.2" width="11" height="7.5" fill="#fbe6cf" stroke="#d9682a" stroke-width="0.8"/><path d="M14 164.7 v2.5 M11 167.7 h6" stroke="#d9682a" stroke-width="0.8"/>
<rect x="2.6" y="174.76" width="24" height="24" rx="2.5" fill="#7a2930" stroke="#8c3a40" stroke-width="0.7"/>
<path d="M5 181.76 h19 l-1.5 15 h-16z" fill="#f07530"/><path d="M10 181.76 q0 -5 4.5 -5 q4.5 0 4.5 5" fill="none" stroke="#f07530" stroke-width="1.5"/><path d="M11 193.76 l3.5 -9 l3.5 9 M12 190.76 h5" stroke="#fff" stroke-width="1.4" fill="none"/>
<rect x="2.6" y="201.82" width="24" height="24" rx="2.5" fill="#7a2930" stroke="#8c3a40" stroke-width="0.7"/>
<rect x="4" y="203.82" width="21" height="20" rx="2" fill="#f4f4f4"/><text x="14.5" y="217.32" font-size="15" font-weight="bold" fill="#111" text-anchor="middle">a</text><path d="M7.5 219.82 q7 3.5 14 0" stroke="#f49a1a" stroke-width="1.4" fill="none"/>
<rect x="2.6" y="228.88" width="24" height="24" rx="2.5" fill="#7a2930" stroke="#8c3a40" stroke-width="0.7"/>
<circle cx="14.5" cy="240.88" r="9" fill="#c8c8c8"/><circle cx="14.5" cy="240.88" r="9" fill="none" stroke="#9a9a9a" stroke-width="2.5" stroke-dasharray="2.5 2"/><circle cx="14.5" cy="240.88" r="3.5" fill="#6e2022"/><path d="M7 248.88 L21 233.88" stroke="#d02020" stroke-width="2.5"/>
<rect x="2.6" y="255.94" width="24" height="24" rx="2.5" fill="#9a9894" stroke="#8c3a40" stroke-width="0.7"/>
<rect x="4.5" y="259.44" width="20" height="17" rx="1.5" fill="#2c2c2c"/><path d="M7.5 263.94 l3 2 l-3 2" stroke="#fff" stroke-width="0.9" fill="none"/><path d="M12 268.94 h4" stroke="#fff" stroke-width="0.9"/>
<rect x="2.6" y="282.99999999999994" width="24" height="24" rx="2.5" fill="#a5acb6" stroke="#8c3a40" stroke-width="0.7"/>
<path d="M7 287.99999999999994 h10 v3 h-7 v3 h6 v2 h-6 v3 h7 v3 h-10z" fill="#2d7cc1"/><path d="M13 290.99999999999994 h10 v13 h-11 v-3 h8 v-3 h-6 v-2 h6 v-2 h-7z" fill="#e9b93a"/>
<path d="M0 293 l2 1.5 l-2 1.5z M29 293 l-1.8 1.5 l1.8 1.5z" fill="#eee"/>
<rect x="0" y="52" width="2" height="0.8" fill="#ddd"/><rect x="0" y="54" width="2" height="0.8" fill="#ddd"/>
<rect x="0" y="265.5" width="2" height="0.8" fill="#ddd"/><rect x="0" y="267.5" width="2" height="0.8" fill="#ddd"/>
</svg>
</body></html>
